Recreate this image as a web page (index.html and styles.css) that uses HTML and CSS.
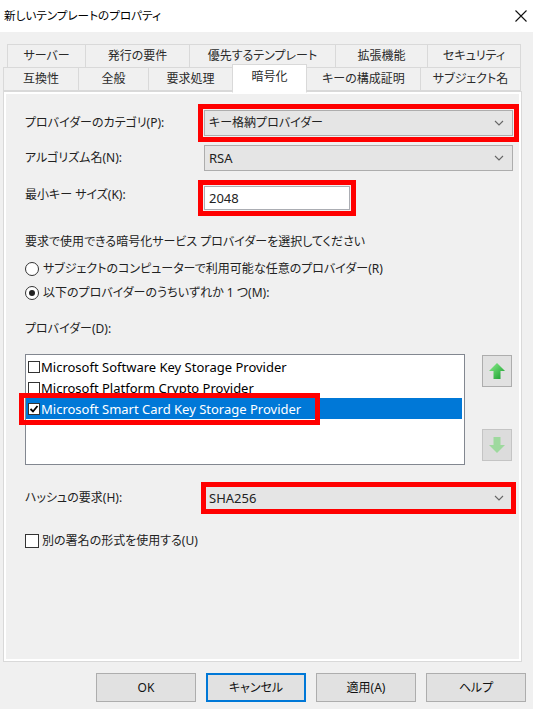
FILE: index.html
```html
<!DOCTYPE html>
<html lang="ja">
  <head>
    <meta charset="UTF-8">
    <title>新しいテンプレートのプロパティ</title>
    <link rel="stylesheet" href="styles.css">
  </head>
  <body>
    <div class="titlebar">
      <span class="title">新しいテンプレートのプロパティ</span>
      <svg class="close" width="12" height="12" viewBox="0 0 12 12">
        <path d="M0.5 0.5 L11.5 11.5 M11.5 0.5 L0.5 11.5" stroke="#111" stroke-width="1.1" fill="none"/>
      </svg>
    </div>

    <div class="tabs">
      <div class="tabrow row1">
        <div class="tab">サーバー</div>
        <div class="tab">発行の要件</div>
        <div class="tab">優先するテンプレート</div>
        <div class="tab">拡張機能</div>
        <div class="tab">セキュリティ</div>
      </div>
      <div class="tabrow row2">
        <div class="tab">互換性</div>
        <div class="tab">全般</div>
        <div class="tab">要求処理</div>
        <div class="tab active">暗号化</div>
        <div class="tab">キーの構成証明</div>
        <div class="tab">サブジェクト名</div>
      </div>
    </div>

    <div class="panel">
      <div class="field">
        <span class="lbl">プロバイダーのカテゴリ(P):</span>
        <div class="combo mark">
          <span>キー格納プロバイダー</span>
          <svg class="chev" width="10" height="6" viewBox="0 0 10 6"><polyline points="1,1 5,5 9,1" fill="none" stroke="#666" stroke-width="1.1"/></svg>
        </div>
      </div>
      <div class="field gap9">
        <span class="lbl">アルゴリズム名(N):</span>
        <div class="combo">
          <span class="latin">RSA</span>
          <svg class="chev" width="10" height="6" viewBox="0 0 10 6"><polyline points="1,1 5,5 9,1" fill="none" stroke="#666" stroke-width="1.1"/></svg>
        </div>
      </div>
      <div class="field field-top">
        <span class="lbl">最小キー サイズ(K):</span>
        <div class="textbox mark latin">2048</div>
      </div>

      <p class="heading">要求で使用できる暗号化サービス プロバイダーを選択してください</p>
      <div class="option first"><span class="radio"></span>サブジェクトのコンピューターで利用可能な任意のプロバイダー(R)</div>
      <div class="option"><span class="radio on"></span>以下のプロバイダーのうちいずれか 1 つ(M):</div>

      <p class="sublbl">プロバイダー(D):</p>
      <div class="listrow">
        <div class="list">
          <div class="item"><span class="cb"></span>Microsoft Software Key Storage Provider</div>
          <div class="item"><span class="cb"></span>Microsoft Platform Crypto Provider</div>
          <div class="item selected">
            <span class="cb"><svg width="10" height="10" viewBox="0 0 10 10"><polyline points="1.5,5 4,7.5 8.5,2" fill="none" stroke="#000" stroke-width="1.8"/></svg></span>Microsoft Smart Card Key Storage Provider
            <span class="annot"></span>
          </div>
        </div>
        <div class="movers">
          <div class="mover">
            <svg width="18" height="18" viewBox="0 0 18 18">
              <defs>
                <linearGradient id="gup" x1="0" y1="0" x2="1" y2="1">
                  <stop offset="0" stop-color="#8ef08e"/>
                  <stop offset="1" stop-color="#139a2a"/>
                </linearGradient>
              </defs>
              <polygon points="9,1 17,9 12.5,9 12.5,17 5.5,17 5.5,9 1,9" fill="url(#gup)"/>
            </svg>
          </div>
          <div class="mover off">
            <svg width="18" height="18" viewBox="0 0 18 18">
              <polygon points="9,17 17,9 12.5,9 12.5,1 5.5,1 5.5,9 1,9" fill="#9ed99e"/>
            </svg>
          </div>
        </div>
      </div>

      <div class="field gap20">
        <span class="lbl">ハッシュの要求(H):</span>
        <div class="combo mark tight">
          <span class="latin">SHA256</span>
          <svg class="chev" width="10" height="6" viewBox="0 0 10 6"><polyline points="1,1 5,5 9,1" fill="none" stroke="#666" stroke-width="1.1"/></svg>
        </div>
      </div>
      <div class="check"><span class="box"></span>別の署名の形式を使用する(U)</div>
    </div>

    <div class="buttons">
      <div class="btn">OK</div>
      <div class="btn default">キャンセル</div>
      <div class="btn">適用(A)</div>
      <div class="btn">ヘルプ</div>
    </div>
  </body>
</html>
```

FILE: styles.css
```css
* {margin: 0; padding: 0; box-sizing: border-box}
body {
  width: 533px;
  height: 709px;
  overflow: hidden;
  background: #f0f0f0;
  color: #222;
  font-family: "Noto Sans", "Noto Sans CJK JP", sans-serif;
  font-size: 12px;
  line-height: 18px;
  font-feature-settings: "palt";
}
.latin {font-size: 13px}

/* title bar */
.titlebar {
  height: 32px;
  background: #fff;
  display: flex;
  align-items: center;
  justify-content: space-between;
  padding: 0 6px 0 4px;
}
.title {font-size: 11.6px; color: #000}

/* tabs */
.tabs {padding-top: 12px}
.tabrow {display: flex; height: 24px}
.row1 {margin-left: 8px}
.row2 {margin-left: 4px; margin-top: -1px}
.tab {
  flex: none;
  border: 1px solid #d9d9d9;
  margin-left: -1px;
  background: #f0f0f0;
  color: #2a2a2a;
  text-align: center;
  line-height: 22px;
  white-space: nowrap;
}
.row1 .tab:nth-child(1) {width: 79px}
.row1 .tab:nth-child(2) {width: 105px}
.row1 .tab:nth-child(3) {width: 147px}
.row1 .tab:nth-child(4) {width: 93px}
.row1 .tab:nth-child(5) {width: 94px}
.row2 .tab:nth-child(1) {width: 76px}
.row2 .tab:nth-child(2) {width: 71px}
.row2 .tab:nth-child(3) {width: 85px}
.row2 .tab:nth-child(4) {width: 75px}
.row2 .tab:nth-child(5) {width: 115px}
.row2 .tab:nth-child(6) {width: 101px}
.tab.active {
  position: relative;
  z-index: 1;
  background: #fff;
  border-bottom-color: #fff;
  margin-top: -3px;
  height: 29px;
  line-height: 24px;
}

/* page */
.panel {
  margin-left: 3px;
  width: 519px;
  height: 571px;
  border: 1px solid #d9d9d9;
  box-shadow: inset 0 0 0 2px #fff;
  padding: 18px 0 0 21px;
}
.field {display: flex; align-items: center; height: 26px}
.field.gap9 {margin-top: 9px}
.field.gap20 {margin-top: 20px}
.field-top {align-items: flex-start; margin-top: 15px; height: 24px}
.field-top .lbl {line-height: 17px}
.lbl {width: 179px; white-space: nowrap}
.combo {
  width: 309px;
  height: 26px;
  background: #e5e5e5;
  border: 1px solid #adadad;
  display: flex;
  align-items: center;
  justify-content: space-between;
  padding: 0 8px 0 4px;
}
.textbox {
  width: 146px;
  height: 24px;
  background: #fff;
  border: 1px solid #abadb3;
  padding-left: 4px;
  line-height: 22px;
}
.mark {outline: 5px solid #f00; outline-offset: 1px}
.mark.tight {outline-offset: -2px}

.heading {margin-top: 20px; line-height: 24px}
.option {display: flex; align-items: center; height: 24px; white-space: nowrap}
.option.first {margin-top: 3px}
.radio {
  width: 14px;
  height: 14px;
  border: 1px solid #333;
  border-radius: 50%;
  background: #fff;
  margin-right: 4px;
  display: flex;
  align-items: center;
  justify-content: center;
}
.radio.on::after {
  content: "";
  width: 6px;
  height: 6px;
  border-radius: 50%;
  background: #222;
}
.sublbl {margin-top: 12px; line-height: 24px}

/* provider list */
.listrow {display: flex; margin-top: 13px}
.list {
  width: 440px;
  height: 111px;
  background: #fff;
  border: 1px solid #828790;
  padding: 1px 2px 0 0;
  font-size: 13px;
}
.item {
  position: relative;
  display: flex;
  align-items: center;
  height: 21px;
  padding-left: 2px;
  color: #000;
  white-space: nowrap;
}
.item.selected {background: #0078d7; color: #fff}
.cb {
  width: 12px;
  height: 12px;
  border: 1px solid #333;
  background: #fff;
  margin-right: 1px;
  display: flex;
  align-items: center;
  justify-content: center;
}
.annot {
  position: absolute;
  left: -7px;
  top: -5px;
  width: 301px;
  height: 32px;
  border: 5px solid #f00;
}
.movers {
  margin-left: 17px;
  display: flex;
  flex-direction: column;
  justify-content: space-between;
  padding: 1px 0 4px;
}
.mover {
  width: 30px;
  height: 32px;
  background: #e1e1e1;
  border: 1px solid #adadad;
  display: flex;
  align-items: center;
  justify-content: center;
}
.mover.off {background: #dcdcdc; border-color: #c4c4c4}

.check {display: flex; align-items: center; height: 16px; margin-top: 22px}
.box {
  width: 14px;
  height: 14px;
  border: 1px solid #333;
  background: #fff;
  margin-right: 3px;
}

/* dialog buttons */
.buttons {
  display: flex;
  justify-content: flex-end;
  gap: 10px;
  margin-top: 11px;
  padding-right: 7px;
}
.btn {
  width: 100px;
  height: 29px;
  background: #e1e1e1;
  border: 1px solid #adadad;
  text-align: center;
  line-height: 27px;
  color: #111;
}
.btn.default {border-color: #0078d7; box-shadow: inset 0 0 0 1px #0078d7}
```
